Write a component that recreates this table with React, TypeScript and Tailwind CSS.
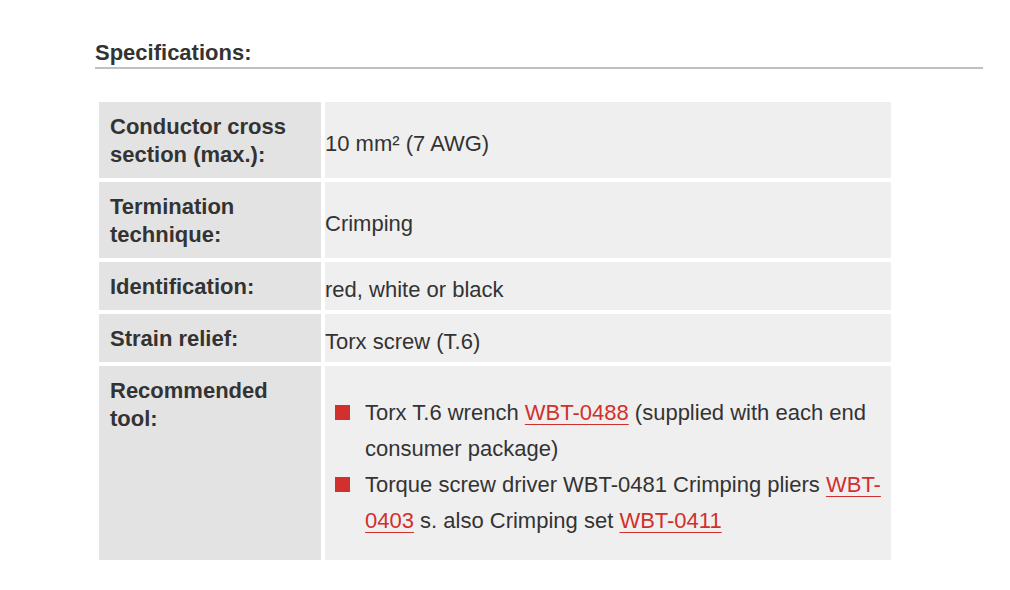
const specs = [
  { label: "Conductor cross section (max.):", value: "10 mm² (7 AWG)" },
  { label: "Termination technique:", value: "Crimping" },
  { label: "Identification:", value: "red, white or black" },
  { label: "Strain relief:", value: "Torx screw (T.6)" },
]

function Link({ children }: { children: React.ReactNode }) {
  return (
    <a href="#" className="text-[#d2302c] underline decoration-1 underline-offset-[4px]">
      {children}
    </a>
  )
}

function Bullet({ children }: { children: React.ReactNode }) {
  return (
    <li className="flex items-start">
      <span className="ml-[10px] mr-[15px] mt-[10px] h-[15px] w-[15px] shrink-0 bg-[#d2302c]" />
      <span className="flex-1">{children}</span>
    </li>
  )
}

export default function App() {
  return (
    <div
      className="h-[590px] w-[1010px] overflow-hidden bg-white pl-[95px] pt-[39px] text-[#333333]"
      style={{ fontFamily: '"Liberation Sans", Arial, sans-serif' }}
    >
      <h2 className="w-[888px] border-b-2 border-[#c0c0c0] text-[22px] font-bold leading-[28px]">
        Specifications:
      </h2>

      <div className="ml-[4px] mt-[33px] grid grid-cols-[222px_566px] gap-[4px] text-[22px] leading-[28px]">
        {specs.map((row) => (
          <div key={row.label} className="contents">
            <div className="bg-[#e3e3e3] pb-[9px] pl-[11px] pr-[20px] pt-[11px] font-bold">
              {row.label}
            </div>
            <div className="flex items-center bg-[#efefef] pt-[8px]">{row.value}</div>
          </div>
        ))}

        <div className="bg-[#e3e3e3] pb-[9px] pl-[11px] pr-[20px] pt-[11px] font-bold">
          Recommended tool:
        </div>
        <div className="flex items-center bg-[#efefef] pb-[21px] pt-[29px]">
          <ul className="w-[560px] leading-[36px]">
            <Bullet>
              Torx T.6 wrench <Link>WBT-0488</Link> (supplied with each end consumer package)
            </Bullet>
            <Bullet>
              Torque screw driver WBT-0481 Crimping pliers <Link>WBT-0403</Link> s. also Crimping set{" "}
              <Link>WBT-0411</Link>
            </Bullet>
          </ul>
        </div>
      </div>
    </div>
  )
}
